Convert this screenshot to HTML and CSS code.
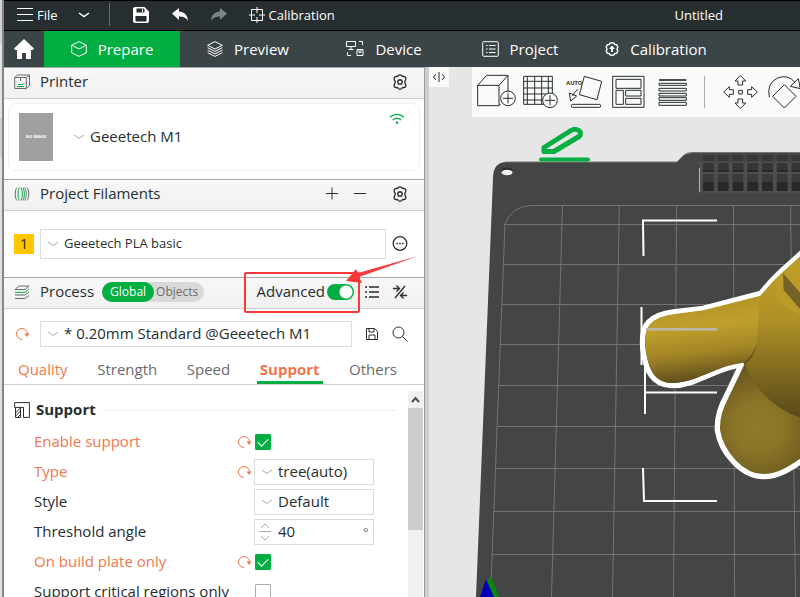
FILE: index.html
```html
<!DOCTYPE html>
<html lang="en">
<head>
<meta charset="utf-8">
<title>Untitled</title>
<link rel="stylesheet" href="styles.css">
</head>
<body>
<svg class="defs" width="0" height="0" aria-hidden="true">
  <symbol id="gear" viewBox="0 0 16 16"><path d="M6.1 1.6C7 .6 9 .6 9.900 1.600l.6.9 1.400-.1c1.500.1 2.300 1.700 1.900 2.900l-.6 1.200c-.3.6-.3 2.400 0 3l.6 1.200c.4 1.200-.4 2.800-1.900 2.900l-1.400-.1-.6.900c-.9 1-2.900 1-3.800 0l-.6-.9-1.400.1c-1.500-.1-2.300-1.700-1.900-2.900l.6-1.200c.3-.6.3-2.400 0-3l-.6-1.200c-.4-1.200.4-2.800 1.900-2.900l1.400.1z"/><circle cx="8" cy="8" r="2.200"/></symbol>
  <symbol id="chevron" viewBox="0 0 12 8"><path d="M1 2l5 3.500L11 2"/></symbol>
  <symbol id="reset" viewBox="0 0 16 16"><path d="M8 13.500A5.500 5.500 0 1 1 13.500 8"/><path class="tip" d="M10.500 7.500h5L13 11z"/></symbol>
</svg>
<div class="screen">
  <div class="behind"></div>
  <div class="window">
    <header class="titlebar">
      <button class="menu"><svg width="16" height="16" viewBox="0 0 16 16"><path d="M0 1.500h16M0 7.500h16M0 13.500h16"/></svg>File</button>
      <button class="more" aria-label="More"><svg width="12" height="8"><use href="#chevron"/></svg></button>
      <span class="rule"></span>
      <div class="quick">
        <button aria-label="Save"><svg width="16" height="16" viewBox="0 0 16 16"><path fill="#fff" fill-rule="evenodd" stroke="none" d="M2 0h9.500L16 4.500V14a2 2 0 0 1-2 2H2a2 2 0 0 1-2-2V2a2 2 0 0 1 2-2zm1.500 1.500v4h8v-3l-1-1zM2.500 9v5.500h11V9z"/><path stroke="#fff" d="M9.500 2v3"/></svg></button>
        <button aria-label="Undo"><svg width="16" height="16" viewBox="0 0 16 16"><path fill="#fff" stroke="none" d="M0 6.500L7 1v3.500c5 .3 8.500 3 9 9.500-2-3.500-5-4.500-9-4.500V13z"/></svg></button>
        <button aria-label="Redo"><svg width="16" height="16" viewBox="0 0 16 16"><path fill="#7f8485" stroke="none" d="M16 6.500L9 1v3.500c-5 .3-8.500 3-9 9.500 2-3.500 5-4.500 9-4.500V13z"/></svg></button>
      </div>
      <button class="calib"><svg width="16" height="16" viewBox="0 0 16 16"><path d="M2.500 2.500h11v11h-11zM8 0v6M8 10v6M0 8h6M10 8h6"/></svg>Calibration</button>
      <span class="doc">Untitled</span>
    </header>
    <nav class="tabs">
      <a class="home" href="#home" aria-label="Home"><svg width="20" height="20" viewBox="0 0 20 20"><path fill="#fff" stroke="none" d="M10 0l10 9.500-1 1.500h-2v9h-5v-6H8v6H3v-9H1L0 9.500z"/></svg></a>
      <a class="tab on" href="#prepare"><svg width="16" height="16" viewBox="0 0 16 16"><path d="M8 .6l7.300 3.600v7.600L8 15.400.7 11.800V4.200zM.7 4.200L8 8l7.300-3.800"/></svg>Prepare</a>
      <a class="tab" href="#preview"><svg width="16" height="16" viewBox="0 0 16 16"><path d="M8 .6l7.400 3.700L8 8 .6 4.300zM.6 6.700L8 10.400l7.400-3.700M.6 9.200L8 12.900l7.400-3.700M.6 11.700L8 15.400l7.400-3.700"/></svg>Preview</a>
      <a class="tab" href="#device"><svg width="18" height="17" viewBox="0 0 18 17"><path d="M.5 1.500h9v5h-9zM5 6.500v3M2.500 9.500h5M13 1.500h3.500V5M1.500 12v3.500H5M11 9.500h6v6h-6zM13 9.500v3h2v-3"/></svg>Device</a>
      <a class="tab" href="#project"><svg width="17" height="16" viewBox="0 0 17 16"><rect x=".7" y=".7" width="15.600" height="14.600" rx="1"/><path d="M4 4.500h1.500M7 4.500h6.500M4 8h1.500M7 8h6.500M4 11.500h1.500M7 11.500h6.500"/></svg>Project</a>
      <a class="tab" href="#calibration"><svg width="14" height="14" viewBox="1 1 14 14"><path stroke-width="1.400" d="M6.100 2.200l1.900-.6 1.900.6.7 1.200 2.200.5 1 2.100-.8 2 .8 2-1 2.100-2.200.5-.7 1.200-1.900.6-1.900-.6-.7-1.200-2.200-.5-1-2.100.8-2-.8-2 1-2.100 2.200-.5z"/><path fill="#fff" stroke="none" d="M8 4.500L11 8H9v3H7V8H5z"/></svg>Calibration</a>
    </nav>
    <main class="work">
      <aside class="side">
        <div class="head">
          <svg width="16" height="16" viewBox="0 0 16 16"><path d="M.7 3.500h11.600v11H.7zM.7 3.500L3.500 1h12L12.300 3.500M15.500 1v10.500l-3.200 3M6.500 4v3"/><path class="g" d="M3 12.500h7M4 10.500h5l1.500-1.500"/></svg>
          <h2>Printer</h2>
          <button class="push gear" aria-label="Printer settings"><svg width="16" height="16"><use href="#gear"/></svg></button>
        </div>
        <div class="body">
          <div class="card">
            <div class="thumb">NO IMAGE</div>
            <label class="pick bare"><svg width="12" height="8"><use href="#chevron"/></svg><select aria-label="Printer"><option>Geeetech M1</option></select></label>
            <svg class="wifi" width="16" height="12" viewBox="0 0 16 12"><path d="M1 4.200c4-3.800 10-3.800 14 0M3.800 7c2.500-2.300 5.900-2.300 8.400 0"/><circle cx="8" cy="9.800" r=".6"/></svg>
          </div>
        </div>
        <div class="head">
          <svg width="16" height="16" viewBox="0 0 16 16"><path d="M3 1.500C.6 4 .6 12 3 14.500M13 1.500c2.400 2.500 2.400 10.500 0 13M10.500 1.500c2.400 2.500 2.400 10.500 0 13"/><path class="g" d="M5.500 1.500c-2 2.500-2 10.500 0 13M7 1.500c1.800 2.500 1.800 10.500 0 13M9 1.500c1.800 2.500 1.800 10.500 0 13"/></svg>
          <h2>Project Filaments</h2>
          <button class="push" aria-label="Add filament"><svg width="16" height="16" viewBox="0 0 16 16"><path d="M2 7.500h12M8 1.500v12"/></svg></button>
          <button aria-label="Remove filament"><svg width="16" height="16" viewBox="0 0 16 16"><path d="M2 7.500h12"/></svg></button>
          <button class="apart gear" aria-label="Filament settings"><svg width="16" height="16"><use href="#gear"/></svg></button>
        </div>
        <div class="body filament">
          <span class="swatch">1</span>
          <label class="pick"><svg width="12" height="8"><use href="#chevron"/></svg><select aria-label="Filament"><option>Geeetech PLA basic</option></select></label>
          <button aria-label="More options"><svg width="16" height="16" viewBox="0 0 16 16"><circle cx="8" cy="7.500" r="6.800" stroke-width="1.300"/><path stroke-width="1.500" d="M4.300 7.500h1.600M7.200 7.500h1.600M10.100 7.500h1.600"/></svg></button>
        </div>
        <div class="head process">
          <svg width="16" height="16" viewBox="0 0 16 16"><path d="M1 5.500L5 2h10l-4 3.500zM1 11h10l4-3M1 14.500h10l4-3"/><path class="g" d="M1 8.300h10L15 5"/></svg>
          <h2>Process</h2>
          <div class="seg"><button class="on">Global</button><button>Objects</button></div>
          <label class="adv push"><span>Advanced</span><input type="checkbox" checked></label>
          <button aria-label="List"><svg width="16" height="16" viewBox="0 0 16 16"><path stroke-width="1.400" d="M1 3h2M5 3h10M1 8h2M5 8h10M1 13h2M5 13h10"/></svg></button>
          <button class="compare" aria-label="Compare"><svg width="16" height="16" viewBox="0 0 16 16"><path stroke-width="1.300" d="M1 4.500h6M4.500 1.500l3 3-3 3M13 2L3 14M15 11.500H9M11.500 8.500l-3 3 3 3"/></svg></button>
          <svg class="note" width="180" height="60" viewBox="0 0 180 60" aria-hidden="true"><rect x="6" y="18" width="114" height="39" rx="1"/><path d="M179 1L120 22l3 6-16-2 10-12 2 4z"/></svg>
        </div>
        <div class="preset">
          <button class="reset" aria-label="Reset preset"><svg width="16" height="16"><use href="#reset"/></svg></button>
          <label class="pick"><svg width="12" height="8"><use href="#chevron"/></svg><select aria-label="Preset"><option>* 0.20mm Standard @Geeetech M1</option></select></label>
          <button aria-label="Save preset"><svg width="16" height="16" viewBox="0 0 16 16"><path d="M2.500 2.500h8l3 3v8h-11zM5 2.500v3.500h5V2.500M5 13.500V9h6v4.500"/></svg></button>
          <button aria-label="Search"><svg width="16" height="16" viewBox="0 0 16 16"><circle cx="6.500" cy="6.500" r="5.500"/><path d="M10.500 10.500l5 5"/></svg></button>
        </div>
        <nav class="pages">
          <a class="changed" href="#quality">Quality</a><a href="#strength">Strength</a><a href="#speed">Speed</a><a class="changed on" href="#support">Support</a><a href="#others">Others</a>
        </nav>
        <div class="scroll">
          <section class="opts">
            <h3><svg width="16" height="16" viewBox="0 0 16 16"><path d="M.6.600h14.800v14.800H9.500v-10H.6zM1.500 5.500v10h5v-10"/><path d="M1.500 11l5-5M1.500 14l5-5M3.500 15.500l3-3"/></svg><span>Support</span></h3>
            <div class="row changed"><label for="enable">Enable support</label><button class="reset" aria-label="Reset"><svg width="16" height="16"><use href="#reset"/></svg></button><input id="enable" type="checkbox" checked></div>
            <div class="row changed"><label for="type">Type</label><button class="reset" aria-label="Reset"><svg width="16" height="16"><use href="#reset"/></svg></button><span class="pick"><svg width="12" height="8"><use href="#chevron"/></svg><select id="type"><option>tree(auto)</option></select></span></div>
            <div class="row"><label for="style">Style</label><span class="pick"><svg width="12" height="8"><use href="#chevron"/></svg><select id="style"><option>Default</option></select></span></div>
            <div class="row"><label for="angle">Threshold angle</label><span class="pick spin"><svg width="12" height="20" viewBox="0 0 12 20"><path d="M2 6l4-4 4 4M0 9.500h12M2 14l4 4 4-4"/></svg><input id="angle" type="text" value="40"><span class="unit">°</span></span></div>
            <div class="row changed"><label for="plate">On build plate only</label><button class="reset" aria-label="Reset"><svg width="16" height="16"><use href="#reset"/></svg></button><input id="plate" type="checkbox" checked></div>
            <div class="row"><label for="critical">Support critical regions only</label><input id="critical" type="checkbox"></div>
          </section>
          <div class="bar"><svg width="15" height="17" viewBox="0 0 15 17"><path d="M4 11l3.500-4 3.500 4"/></svg><div class="grip"></div></div>
        </div>
      </aside>
      <div class="view">
        <svg class="scene" viewBox="429 67 371 530" preserveAspectRatio="xMinYMin slice" aria-label="Build plate">
          <defs>
            <linearGradient id="arm" x1="0.400" y1="0" x2="0.550" y2="1"><stop offset="0" stop-color="#b28f24"/><stop offset=".35" stop-color="#bfa02c"/><stop offset=".65" stop-color="#a28426"/><stop offset="1" stop-color="#54461c"/></linearGradient>
            <linearGradient id="torso" x1="0" y1="0" x2="0" y2="1"><stop offset="0" stop-color="#bf9f29"/><stop offset=".4" stop-color="#b09127"/><stop offset="1" stop-color="#564719"/></linearGradient>
            <radialGradient id="leg" cx="865" cy="680" r="190" gradientUnits="userSpaceOnUse"><stop offset="0" stop-color="#8f792a"/><stop offset=".4" stop-color="#8a7427"/><stop offset="1" stop-color="#66551f"/></radialGradient>
            <pattern id="vent" x="703" y="154" width="14.750" height="40" patternUnits="userSpaceOnUse"><path fill="#363837" d="M0 1h11v6H0z"/><path fill="#343635" d="M0 9h11v9H0z"/><path fill="#3a3c3b" d="M0 20h11v8H0z"/><path fill="#272929" d="M0 16h11v2H0zM0 28h11v9H0z"/></pattern>
          </defs>
          <path fill="#444645" d="M476 597L493 178Q493 162 507 162H677L684 155Q687 153 692 153H810V597z"/>
          <path fill="none" stroke="#747675" d="M505 162H677L684 155Q687 152.500 692 152.500H810"/>
          <ellipse cx="507" cy="171" rx="5.500" ry="3.500" fill="#292b2a"/><ellipse cx="507" cy="172.500" rx="5.500" ry="2.800" fill="#f4f4f4"/>
          <path fill="#4d4f4e" d="M699 162h110v31H699z"/><path fill="url(#vent)" d="M703 154h110v38H703z"/>
          <path fill="none" stroke="#b5b5b5" d="M699.500 168v24"/>
          <g fill="none" stroke="#737574">
            <path d="M800 205.500H531Q511 207 505 224L490.500 597M504 224.500H800M503 264.500H800M502 304.500H800M500 344.500H800M498 385.500H800M497 426.500H800M496 468.500H800M494 511.500H800M492 554.500H800"/>
            <path d="M562.500 205L551.500 597M619.300 205L612.500 597M676.600 205L673.500 597M733.500 205L734.600 597M790.500 205L795.500 597"/>
          </g>
          <g fill="none" stroke="#fff" stroke-width="2"><path d="M717 220.500H643L643.500 256M641.500 307v58M645 362L645 414M645 392.500H717M643 468L644 501H717"/></g>
          <g transform="translate(470 200) scale(.33333)">
            <path fill="url(#leg)" stroke="#fff" stroke-width="16" stroke-linejoin="round" d="M1010 143L990 163L935 212Q900 245 872 280L700 325L610 336Q560 342 536 366Q512 390 519 450C528 510 545 555 605 557C680 557 730 507 814 494L768 590Q740 640 742 690C752 757 815 830 880 830C930 830 970 800 1010 772z"/>
            <path fill="url(#arm)" d="M872 287L700 331L610 343Q562 349 540 373Q521 395 527 450C536 505 550 547 605 549C680 549 730 500 820 488Q880 450 880 287z"/>
            <path fill="url(#torso)" d="M1010 152L938 216Q900 250 869 290L861 425Q854 475 825 493Q875 620 1010 660z"/>
            <path fill="#bc9c28" d="M940 218Q905 245 920 290Q940 335 1010 345V150z"/><path fill="#75612a" d="M939 220L1010 300V350L941 270z"/>
          </g>
          <path stroke="#bbb7aa" stroke-width="2.500" d="M646 329.300H717"/>
          <path fill="#078a0b" d="M487 580l4-3 8 20h-8z"/><path fill="#0000b8" d="M486 579l8 18h-14z"/>
          <g fill="none" stroke="#04ae42" stroke-linecap="round" stroke-linejoin="round"><path stroke-width="5" d="M544 151.500v-4L571 130.500c5-3 13 1 8 6L554 151.500z"/><path stroke-width="4" d="M541 159.500h47"/></g>
        </svg>
        <button class="fold" aria-label="Collapse sidebar"><svg width="14" height="10" viewBox="0 0 14 10"><path d="M4 2L1.500 5 4 8M7 0v10M10 2l2.500 3L10 8"/></svg></button>
        <div class="tools">
          <button aria-label="Add model"><svg viewBox="156 18 120 120"><path d="M158 58h64v61h-64zM158 58l27-30h64l-27 30M249 28v49M222 119l5-6"/><circle cx="249" cy="97" r="22"/><path d="M234 97h30M249 82v30"/></svg></button>
          <button aria-label="Add plate"><svg viewBox="288 18 120 120"><path d="M296 31h86v84h-86zM307 31v84M329 31v84M350 31v84M370 31v84M296 46h86M296 66h86M296 84h86M296 102h86"/><circle cx="375" cy="103" r="22" fill="#fafafa"/><path d="M360 103h30M375 88v30"/></svg></button>
          <button aria-label="Auto orient"><svg viewBox="420 18 120 120"><path d="M478 31l52 15-14 55-53-15zM459 70q-12 8-16 20M433 81l4 24 18-15z"/><rect x="439" y="115" width="88" height="9" rx="4"/><text x="424" y="58">AUTO</text></svg></button>
          <button aria-label="Arrange"><svg viewBox="552 18 120 120"><path d="M563 31h94v93h-94zM573 40h75v27h-75zM573 73h22v42h-22zM602 73h46v17h-46zM602 97h46v18h-46z"/></svg></button>
          <button aria-label="Layer height"><svg viewBox="684 18 120 120"><path d="M702 42h82" stroke-width="5"/><path d="M702 52h82v6h-82zM702 67h82v8h-82zM702 82h82v8h-82zM702 95h82v8h-82zM702 109h82v9h-82z"/></svg></button>
          <span class="split"></span>
          <button aria-label="Move"><svg viewBox="885 18 120 120"><path d="M946 28l16 17h-9v12h-14V45h-9zM946 128l16-17h-9V99h-14v12h-9zM896 78l17-16v9h12v14h-12v9zM997 78l-17-16v9h-12v14h12v9zM941 73h11v11h-11z"/></svg></button>
          <button aria-label="Rotate"><svg viewBox="1017 18 120 120"><path d="M1078 56l35 35-35 35-35-35zM1033 94q-9-42 25-58 31-12 52 13M1120 38l6 30-30-7z"/></svg></button>
        </div>
      </div>
    </main>
  </div>
</div>
</body>
</html>
```
FILE: styles.css
```css
* { box-sizing: border-box; }
body { margin: 0; font: 15px/20px "Open Sans", "Noto Sans", sans-serif; color: #262e30; }
button, select, input { font: inherit; color: inherit; margin: 0; }
button { border: 0; padding: 0; background: none; display: flex; align-items: center; justify-content: center; }
a { color: inherit; text-decoration: none; }
h2, h3 { margin: 0; font-size: 15px; font-weight: 400; }
h2, h3 span, .adv span, .row > label, .pick select, .pick input { padding-bottom: 2px; }
svg { flex: none; fill: none; stroke: currentColor; }
.defs { position: absolute; }

.screen { display: flex; height: 100vh; overflow: hidden; }
.behind { flex: 0 0 4px; border-right: 2px solid #858585; background: linear-gradient(#d2d2d2 44px, #e4e4e4 44px 118px, #cfcfcf 118px 157px, #e0e0e0 157px); }
.window { flex: 1; min-width: 0; display: flex; flex-direction: column; }

.titlebar { display: flex; align-items: center; height: 31px; flex: none; padding: 0 0 2px 13px; background: #262e30; border: 1px solid #000; border-right: 0; border-left: 0; color: #fff; font-size: 13px; }
.menu, .calib { gap: 4px; }
.more { margin-left: 20px; }
.more svg { stroke-width: 1.500; }
.rule { width: 1px; height: 23px; margin: 0 23px 0 19px; background: #6b6f70; }
.quick { display: flex; gap: 23px; margin-right: 22px; }
.doc { margin-left: auto; margin-right: 77px; }

.tabs { display: flex; height: 36px; flex: none; background: #3b4446; color: #fff; }
.home { width: 40px; display: flex; align-items: center; justify-content: center; }
.tab { width: 136px; padding-bottom: 1px; display: flex; align-items: center; justify-content: center; gap: 11px; }
.tab.on { background: #00ae42; }

.work { flex: 1; min-height: 0; display: flex; }
.side { width: 425px; flex: none; display: flex; flex-direction: column; border-right: 4px solid #cdcdcd; box-shadow: inset -1px 0 #9c9c9c; padding-right: 1px; }
.head { position: relative; display: flex; align-items: center; gap: 10px; height: 32px; flex: none; padding: 0 16px 2px 10px; border-top: 1px solid #a6a9aa; border-bottom: 1px solid #cecece; background: linear-gradient(#f8f8f8, #f0f0f0); }
.head > svg:first-child { color: #6b6b6b; }
.gear svg { stroke-width: 1.400; }
.g { stroke: #00ae42; }
.push { margin-left: auto; }
.head .push + button { margin-left: 2px; }
.head .apart { margin-left: 14px; }
.body { display: flex; flex: none; height: 80px; padding: 4px 4px 8px; }
.card { flex: 1; display: flex; align-items: center; padding: 0 14px 0 10px; border: 1px solid #eee; border-radius: 8px; }
.thumb { width: 34px; height: 48px; display: flex; align-items: center; justify-content: center; background: #a0a0a0; color: #fff; font: bold 4px/6px "Open Sans", sans-serif; white-space: nowrap; }
.wifi { align-self: flex-start; margin: 9px 0 0 auto; color: #00ae42; stroke-width: 1.300; }

.pick { position: relative; display: flex; align-items: center; width: 120px; height: 26px; padding-left: 6px; border: 1px solid #dbdbdb; background: #fff; color: #262e30; }
.pick svg { color: #a6a9aa; }
.pick select, .pick input { flex: 1; min-width: 0; height: 100%; margin-left: 5px; padding-top: 0; padding-left: 0; padding-right: 0; border: 0; background: none; outline: 0; appearance: none; }
.pick.bare { width: auto; border: 0; margin-left: 14px; }
.pick.spin { padding-left: 4px; }
.pick.spin input { margin-left: 7px; }
.filament, .preset { align-items: center; gap: 6px; padding: 0 16px 0 10px; }
.filament { height: 66px; font-size: 13px; }
.swatch { width: 20px; height: 20px; background: #ffc600; text-align: center; font-size: 15px; line-height: 19px; }
.filament .pick { flex: 1; height: 30px; }
.seg { display: flex; height: 20px; margin-left: -2px; border-radius: 10px; background: #d9d9d9; color: #6b6b6b; font-size: 12px; }
.seg button { padding: 0 6px 0 2px; }
.seg .on { padding: 0 8px; border-radius: 10px; background: #00ae42; color: #fff; }
.adv { display: flex; align-items: center; gap: 2px; }
.adv input { appearance: none; width: 27px; height: 16px; margin: 0; border-radius: 8px; background: radial-gradient(circle at 19px 8px, #fff 6px, #00ae42 7px); }
.head .adv + button { margin-left: 0; }
.head .compare { margin-left: 2px; }
.note { position: absolute; right: 5px; top: -23px; stroke: #f8393b; stroke-width: 2; pointer-events: none; }
.note path { fill: #f8393b; stroke: none; }
.preset { display: flex; flex: none; padding-top: 12px; }
.preset .pick { flex: 1; margin: 0 6px 0 4px; }
.preset > button:last-child { margin-left: 6px; }
.reset { color: #f2754e; }
.tip { fill: #f2754e; stroke: none; }

.pages { display: flex; flex: none; justify-content: space-between; height: 38px; padding: 0 24px 0 11px; border-bottom: 1px solid #cecece; color: #6b6b6b; }
.pages a { padding: 12px 3px 0; }
.pages .on { font-weight: 700; border-bottom: 3px solid #00ae42; }
.pages .changed, .row.changed { color: #f2754e; }
.scroll { flex: 1; min-height: 0; display: flex; overflow: hidden; }
.opts { flex: 1; padding: 14px 11px 0 10px; }
.opts h3 { display: flex; align-items: center; gap: 6px; margin-bottom: 6px; font-weight: 700; }
.opts h3::after { content: ""; flex: 1; height: 1px; background: #eee; }
.row { display: flex; align-items: center; height: 30px; padding-left: 20px; }
.row > label { width: 202px; flex: none; white-space: nowrap; }
.row .reset { margin-right: 2px; }
.row > :nth-child(2):not(.reset) { margin-left: 18px; }
.row input[type=checkbox] { appearance: none; display: grid; place-items: start center; width: 16px; height: 16px; margin-left: 1px; border: 1px solid #acacac; border-radius: 1px; }
.row > input[type=checkbox]:nth-child(2) { margin-left: 19px; }
.row input:checked { background: #00ae42; border-color: #00ae42; }
.row input:checked::after { content: ""; width: 9px; height: 5px; margin-top: 3px; border: solid #fff; border-width: 0 0 1px 1px; transform: rotate(-45deg); }
.unit { width: 10px; font-size: 13px; color: #6b6b6b; }
.bar { width: 15px; flex: none; margin: 6px 1px 0 0; background: #f0f0f0; }
.bar svg { display: block; stroke: #505050; stroke-width: 2; }
.grip { height: 122px; background: #cdcdcd; }

.view { position: relative; flex: 1; min-width: 0; background: #e6e6e6; overflow: hidden; }
.scene { display: block; width: 100%; height: 100%; stroke: none; }
.fold { position: absolute; left: 0; top: 0; width: 20px; height: 20px; background: #fafafa; }
.tools { position: absolute; left: 43px; right: 0; top: 0; display: flex; align-items: center; gap: 4px; height: 50px; padding-left: 5px; background: #fafafa; overflow: hidden; }
.tools button { width: 40px; height: 40px; flex: none; }
.tools svg { width: 40px; height: 40px; stroke-width: 3; }
.tools text { font: bold 17px "Open Sans", sans-serif; fill: #262e30; stroke: none; }
.split { width: 1px; height: 32px; flex: none; margin: 0 11px 0 7px; background: #acacac; }
```
